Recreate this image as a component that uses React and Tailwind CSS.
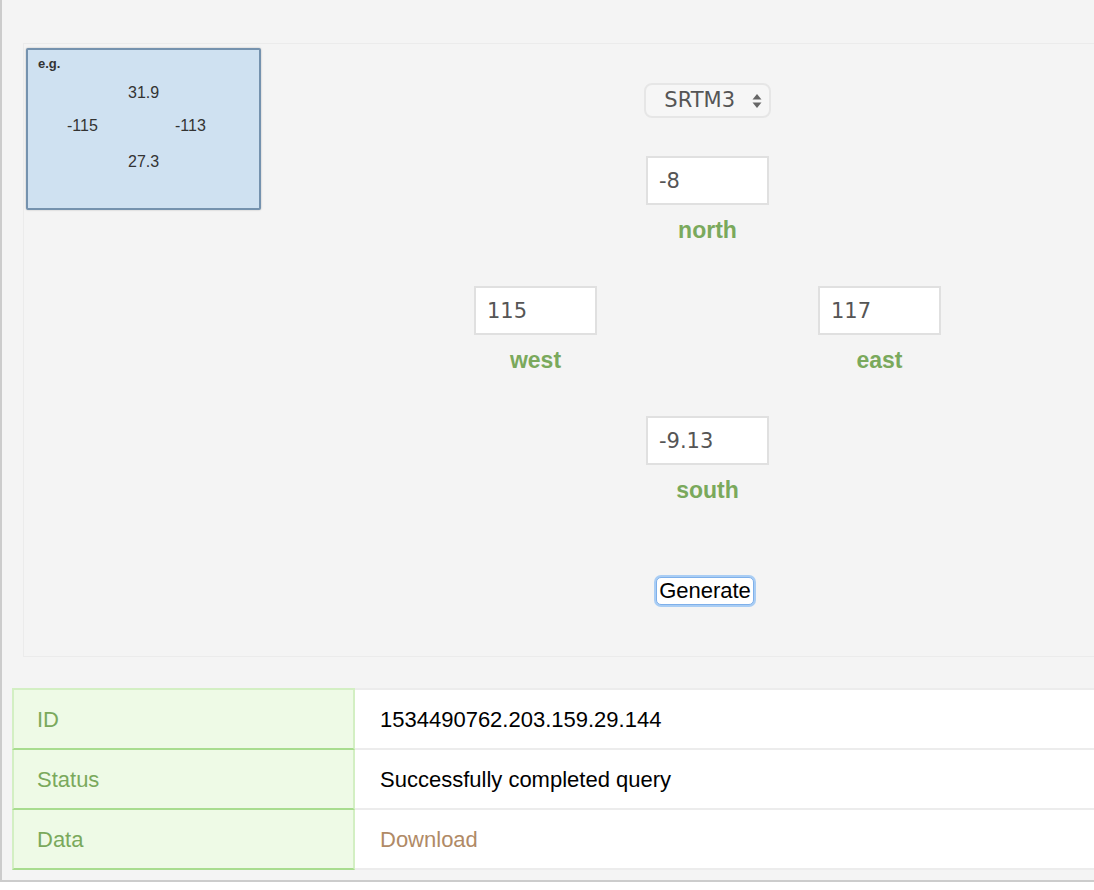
import React from 'react';

const labelCls = "h-[50px] flex items-center justify-center text-[23px] font-bold text-[#7aa95c] font-['Liberation_Sans',Arial,sans-serif]";
const inputCls = "w-[123px] h-[49px] bg-white border-2 border-[#e0e0e0] px-[11px] text-[21px] text-[#555] font-['DejaVu_Sans',sans-serif] outline-none";

const CoordField = ({ value, label }) => (
  <div className="flex flex-col items-center w-[123px]">
    <input className={inputCls} defaultValue={value} />
    <div className={labelCls}>{label}</div>
  </div>
);

const rows = [
  { key: 'ID', value: '1534490762.203.159.29.144' },
  { key: 'Status', value: 'Successfully completed query' },
  { key: 'Data', value: 'Download', link: true },
];

const App = () => {
  return (
    <div className="w-[1094px] h-[890px] overflow-hidden bg-white font-['Liberation_Sans',Arial,sans-serif]">
      <div className="h-[882px] bg-[#f4f4f4] border-l-2 border-b-2 border-[#cccccc] pt-[43px]">
        {/* query panel */}
        <div className="ml-[21px] w-[1200px] h-[614px] border border-[#ebebeb] flex">
          <div className="mt-[4px] ml-[2px] w-[235px] h-[162px] bg-[#cfe1f1] border-2 border-[#7592ae] rounded-[2px] shadow-[0_0_2px_rgba(0,0,0,0.25)] text-[#333] relative">
            <div className="pt-[7px] pl-[10px] text-[13px] font-bold leading-[14px]">e.g.</div>
            <div className="pl-[100px] mt-[12px] text-[16px] leading-[20px] font-medium">31.9</div>
            <div className="flex mt-[13px] text-[16px] leading-[20px]">
              <span className="pl-[39px] w-[147px]">-115</span>
              <span>-113</span>
            </div>
            <div className="pl-[100px] mt-[16px] text-[16px] leading-[20px]">27.3</div>
          </div>

          <div className="ml-[213px] w-[467px] flex flex-col items-center pt-[39px]">
            <div className="w-[127px] h-[35px] rounded-[8px] border-2 border-[#e6e6e6] bg-[#f6f6f6] flex items-center justify-end pr-[7px] gap-[17px] text-[21px] text-[#555] font-['DejaVu_Sans',sans-serif]">
              <span>SRTM3</span>
              <svg width="10" height="16" viewBox="0 0 10 16">
                <path d="M5 1 L9.5 6.5 H0.5 Z" fill="#666" />
                <path d="M5 15 L9.5 9.5 H0.5 Z" fill="#666" />
              </svg>
            </div>

            <div className="mt-[38px]">
              <CoordField value="-8" label="north" />
            </div>

            <div className="mt-[31px] w-full flex justify-between">
              <CoordField value="115" label="west" />
              <CoordField value="117" label="east" />
            </div>

            <div className="mt-[31px]">
              <CoordField value="-9.13" label="south" />
            </div>

            <button className="mt-[62px] mr-[5px] h-[28px] px-[2px] bg-white rounded-[5px] border border-[#7fb0ea] shadow-[0_0_0_2px_#a9cdf4] text-[22px] leading-[24px] text-black">
              Generate
            </button>
          </div>
        </div>

        {/* result table */}
        <div className="mt-[31px] ml-[10px] w-[1200px]">
          {rows.map((row, i) => (
            <div key={row.key} className={`flex ${i === 0 ? 'h-[62px]' : 'h-[60px]'}`}>
              <div className={`w-[343px] bg-[#eefae6] border-l-2 border-r-2 border-[#d3efc3] border-b-2 border-b-[#a8dc8f] ${i === 0 ? 'border-t-2 border-t-[#d3efc3]' : ''} flex items-center pl-[23px] text-[22px] text-[#7aa95c]`}>
                {row.key}
              </div>
              <div className={`flex-1 bg-white border-b-2 border-[#ececec] ${i === 0 ? 'border-t-2' : ''} flex items-center pl-[25px] text-[22px] ${row.link ? 'text-[#b08a66]' : 'text-black'}`}>
                {row.value}
              </div>
            </div>
          ))}
        </div>
      </div>
    </div>
  );
};

export default App;
